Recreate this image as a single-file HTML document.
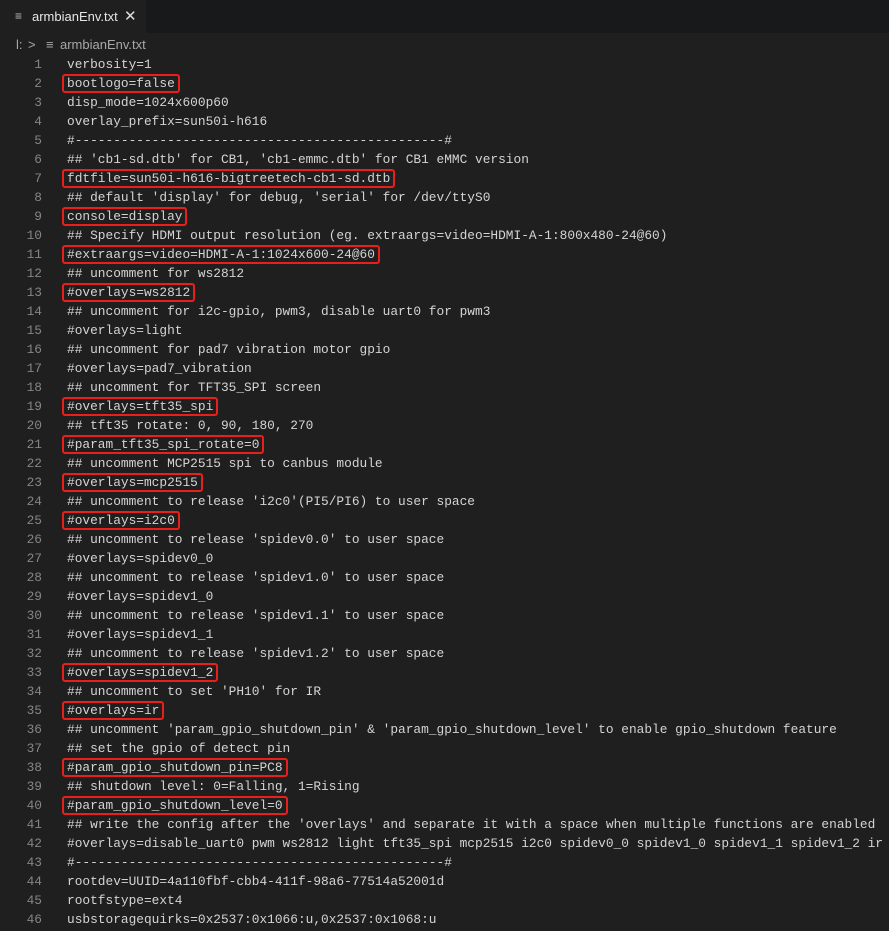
<!DOCTYPE html>
<html><head><meta charset="utf-8"><style>
html,body{margin:0;padding:0;background:#1f1f1f;width:889px;height:931px;overflow:hidden}
.tabbar{position:absolute;left:0;top:0;width:889px;height:33px;background:#18191a}
.tab{position:absolute;left:0;top:0;width:146px;height:33px;background:#1f1f1f;font:13px "Liberation Sans",sans-serif;color:#e6e6e6}
.tab .ic{position:absolute;left:15px;top:9px;color:#bbb;font-size:12px}
.tab .t{position:absolute;left:32px;top:9px}
.tab .x{position:absolute;left:124px;top:7px;font-size:15px;color:#ddd}
.crumb{position:absolute;top:37px;font:13px "Liberation Sans",sans-serif;color:#a8a8a8;white-space:pre}
.nums{position:absolute;left:0;top:55px;width:42px;text-align:right;font:12.83px/19px "Liberation Mono",monospace;color:#858585;white-space:pre}
.code{position:absolute;left:67px;top:55px;font:12.83px/19px "Liberation Mono",monospace;color:#d4d4d4;white-space:pre}
.b{border:2px solid #e8201c;border-radius:3px;margin:0 -5px;padding:0 3px}
</style></head><body>
<div class="tabbar"><div class="tab"><span class="ic">≡</span><span class="t">armbianEnv.txt</span><span class="x">✕</span></div></div>
<div class="crumb" style="left:16px">l:</div><div class="crumb" style="left:28px">&gt;</div><div class="crumb" style="left:46px">≡</div><div class="crumb" style="left:60px">armbianEnv.txt</div>
<div class="nums">1
2
3
4
5
6
7
8
9
10
11
12
13
14
15
16
17
18
19
20
21
22
23
24
25
26
27
28
29
30
31
32
33
34
35
36
37
38
39
40
41
42
43
44
45
46</div>
<div class="code">verbosity=1
<span class="b">bootlogo=false</span>
disp_mode=1024x600p60
overlay_prefix=sun50i-h616
#------------------------------------------------#
## 'cb1-sd.dtb' for CB1, 'cb1-emmc.dtb' for CB1 eMMC version
<span class="b">fdtfile=sun50i-h616-bigtreetech-cb1-sd.dtb</span>
## default 'display' for debug, 'serial' for /dev/ttyS0
<span class="b">console=display</span>
## Specify HDMI output resolution (eg. extraargs=video=HDMI-A-1:800x480-24@60)
<span class="b">#extraargs=video=HDMI-A-1:1024x600-24@60</span>
## uncomment for ws2812
<span class="b">#overlays=ws2812</span>
## uncomment for i2c-gpio, pwm3, disable uart0 for pwm3
#overlays=light
## uncomment for pad7 vibration motor gpio
#overlays=pad7_vibration
## uncomment for TFT35_SPI screen
<span class="b">#overlays=tft35_spi</span>
## tft35 rotate: 0, 90, 180, 270
<span class="b">#param_tft35_spi_rotate=0</span>
## uncomment MCP2515 spi to canbus module
<span class="b">#overlays=mcp2515</span>
## uncomment to release 'i2c0'(PI5/PI6) to user space
<span class="b">#overlays=i2c0</span>
## uncomment to release 'spidev0.0' to user space
#overlays=spidev0_0
## uncomment to release 'spidev1.0' to user space
#overlays=spidev1_0
## uncomment to release 'spidev1.1' to user space
#overlays=spidev1_1
## uncomment to release 'spidev1.2' to user space
<span class="b">#overlays=spidev1_2</span>
## uncomment to set 'PH10' for IR
<span class="b">#overlays=ir</span>
## uncomment 'param_gpio_shutdown_pin' &amp; 'param_gpio_shutdown_level' to enable gpio_shutdown feature
## set the gpio of detect pin
<span class="b">#param_gpio_shutdown_pin=PC8</span>
## shutdown level: 0=Falling, 1=Rising
<span class="b">#param_gpio_shutdown_level=0</span>
## write the config after the 'overlays' and separate it with a space when multiple functions are enabled
#overlays=disable_uart0 pwm ws2812 light tft35_spi mcp2515 i2c0 spidev0_0 spidev1_0 spidev1_1 spidev1_2 ir
#------------------------------------------------#
rootdev=UUID=4a110fbf-cbb4-411f-98a6-77514a52001d
rootfstype=ext4
usbstoragequirks=0x2537:0x1066:u,0x2537:0x1068:u</div>
</body></html>
